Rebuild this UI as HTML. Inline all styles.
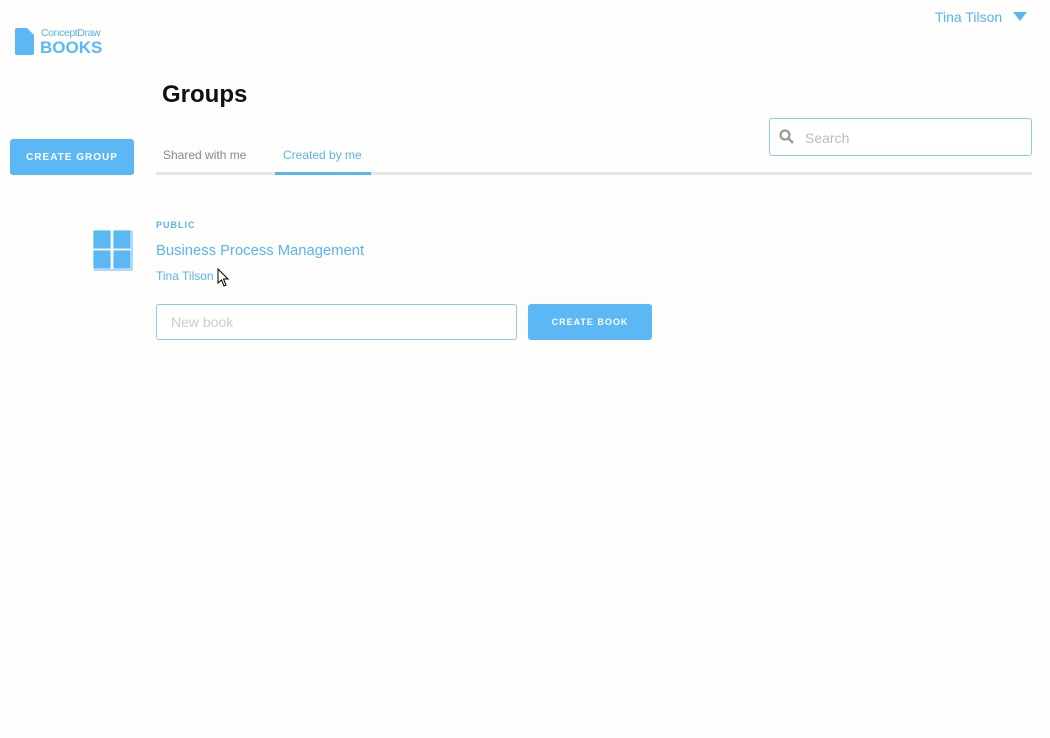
<!DOCTYPE html>
<html><head><style>
body{margin:0;width:1050px;height:738px;background:#fdfdfb;font-family:"Liberation Sans",sans-serif;position:relative;overflow:hidden}
.a{position:absolute}
.blue{color:#5ab4ee}
</style></head><body>
<svg class="a" style="left:15px;top:28px" width="20" height="27"><path d="M2 0H12L19 7V25Q19 27 17 27H2Q0 27 0 25V2Q0 0 2 0Z" fill="#5bb8f5"/></svg>
<div class="a blue" style="left:41px;top:27px;font-size:10.5px;letter-spacing:-0.4px">ConceptDraw</div>
<div class="a" style="left:40px;top:38px;font-size:17px;font-weight:bold;color:#5bb8f5;letter-spacing:0">BOOKS</div>
<div class="a blue" style="left:935px;top:9px;font-size:14px">Tina Tilson</div>
<svg class="a" style="left:1013px;top:12px" width="14" height="10"><path d="M0 0H14L7 9Z" fill="#5ab4ee"/></svg>
<div class="a" style="left:162px;top:81px;font-size:24px;font-weight:bold;color:#111">Groups</div>
<div class="a" style="left:10px;top:139px;width:124px;height:36px;background:#5bb8f5;border-radius:3px;color:#fff;font-size:10px;font-weight:bold;letter-spacing:1px;text-align:center;line-height:38px">CREATE GROUP</div>
<div class="a" style="left:163px;top:148px;font-size:12px;color:#888">Shared with me</div>
<div class="a blue" style="left:283px;top:148px;font-size:12px">Created by me</div>
<div class="a" style="left:156px;top:172px;width:876px;height:3px;background:#e6e6e6"></div>
<div class="a" style="left:275px;top:172px;width:96px;height:3px;background:#5ab4ee"></div>
<div class="a" style="left:769px;top:118px;width:261px;height:36px;border:1px solid #8ccbef;border-radius:3px;background:#fff"></div>
<svg class="a" style="left:779px;top:129px" width="16" height="16"><circle cx="6" cy="6" r="4.5" stroke="#999" stroke-width="2.2" fill="none"/><path d="M9.5 9.5L14 14" stroke="#999" stroke-width="2.5"/></svg>
<div class="a" style="left:805px;top:130px;font-size:14px;color:#bbb">Search</div>
<svg class="a" style="left:92px;top:229px" width="41" height="42"><g fill="#5bb8f5" stroke="#fff" stroke-width="0.8"><rect x="1" y="1" width="18" height="19"/><rect x="21" y="1" width="18" height="19"/><rect x="1" y="21" width="18" height="19"/><rect x="21" y="21" width="18" height="19"/></g><path d="M2 41H40V2" stroke="#5bb8f5" fill="none"/></svg>
<div class="a blue" style="left:156px;top:220px;font-size:9px;font-weight:bold;letter-spacing:1px">PUBLIC</div>
<div class="a blue" style="left:156px;top:243px;font-size:14.8px">Business Process Management</div>
<div class="a blue" style="left:156px;top:269px;font-size:12px">Tina Tilson</div>
<svg class="a" style="left:217px;top:268px" width="12" height="19"><path d="M1 1V15L4.5 12L7 18L9 17L6.5 11H11Z" fill="#fff" stroke="#000"/></svg>
<div class="a" style="left:156px;top:304px;width:359px;height:34px;border:1px solid #8ccbef;border-radius:3px;background:#fff"></div>
<div class="a" style="left:171px;top:314px;font-size:14px;color:#ccc">New book</div>
<div class="a" style="left:528px;top:304px;width:124px;height:36px;background:#5bb8f5;border-radius:3px;color:#fff;font-size:9px;font-weight:bold;letter-spacing:1px;text-align:center;line-height:37px">CREATE BOOK</div>
</body></html>
